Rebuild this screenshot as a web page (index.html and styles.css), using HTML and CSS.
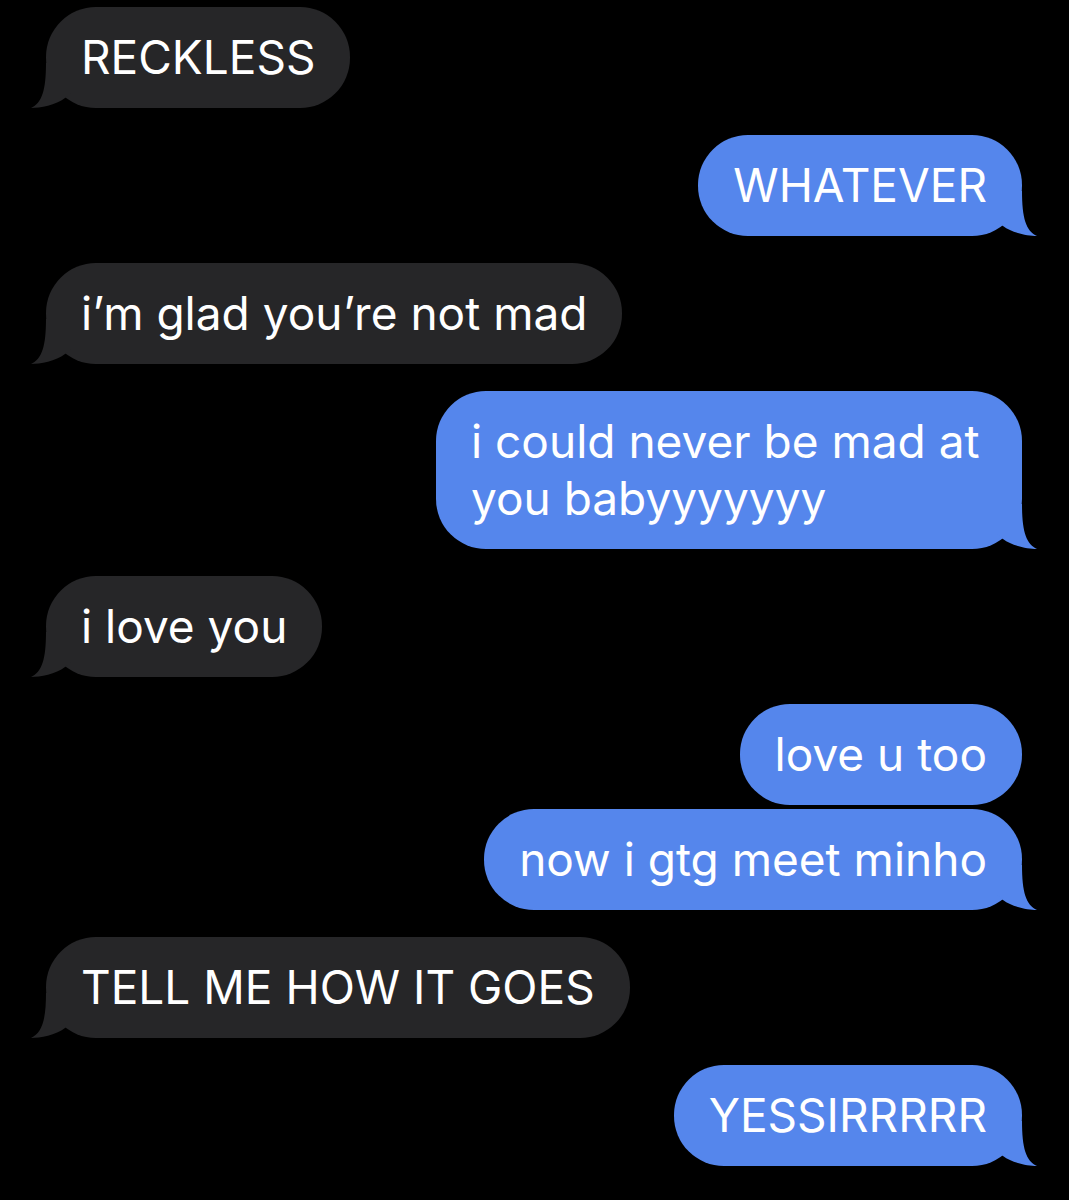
FILE: index.html
```html
<!DOCTYPE html>
<html>
<head>
<meta charset="utf-8">
<link rel="stylesheet" href="styles.css">
</head>
<body>
<div class="thread">
  <div class="msg them tail">RECKLESS<svg class="tl" viewBox="0 0 40 45"><path d="M40 0 L15 0 C15 27 11 40 0 45 C9 45 25 42 34 35 L40 30 Z"/></svg></div>
  <div class="msg me tail">WHATEVER<svg class="tr" viewBox="0 0 40 45"><path d="M0 0 L25 0 C25 27 29 40 40 45 C31 45 15 42 6 35 L0 30 Z"/></svg></div>
  <div class="msg them tail">i’m glad you’re not mad<svg class="tl" viewBox="0 0 40 45"><path d="M40 0 L15 0 C15 27 11 40 0 45 C9 45 25 42 34 35 L40 30 Z"/></svg></div>
  <div class="msg me tail wrap">i could never be mad at you babyyyyyyy<svg class="tr" viewBox="0 0 40 45"><path d="M0 0 L25 0 C25 27 29 40 40 45 C31 45 15 42 6 35 L0 30 Z"/></svg></div>
  <div class="msg them tail">i love you<svg class="tl" viewBox="0 0 40 45"><path d="M40 0 L15 0 C15 27 11 40 0 45 C9 45 25 42 34 35 L40 30 Z"/></svg></div>
  <div class="msg me">love u too</div>
  <div class="msg me tail cont">now i gtg meet minho<svg class="tr" viewBox="0 0 40 45"><path d="M0 0 L25 0 C25 27 29 40 40 45 C31 45 15 42 6 35 L0 30 Z"/></svg></div>
  <div class="msg them tail">TELL ME HOW IT GOES<svg class="tl" viewBox="0 0 40 45"><path d="M40 0 L15 0 C15 27 11 40 0 45 C9 45 25 42 34 35 L40 30 Z"/></svg></div>
  <div class="msg me tail">YESSIRRRRR<svg class="tr" viewBox="0 0 40 45"><path d="M0 0 L25 0 C25 27 29 40 40 45 C31 45 15 42 6 35 L0 30 Z"/></svg></div>
</div>
</body>
</html>
```
FILE: styles.css
```css
html, body {
  margin: 0;
  padding: 0;
  background: #000;
}
body {
  width: 1069px;
  height: 1200px;
  overflow: hidden;
}
.thread {
  display: flex;
  flex-direction: column;
  padding: 7px 47px 0 46px;
  font-family: Inter, "Noto Sans", sans-serif;
}
.msg {
  position: relative;
  box-sizing: border-box;
  padding: 22px 35px;
  line-height: 57px;
  font-size: 46px;
  color: #fff;
  border-radius: 50px;
  margin-top: 27px;
  white-space: nowrap;
}
.msg:first-child {
  margin-top: 0;
}
.msg.cont {
  margin-top: 4px;
}
.msg.wrap {
  white-space: normal;
  width: 586px;
}
.them {
  align-self: flex-start;
  background: #262628;
}
.me {
  align-self: flex-end;
  background: #5586ec;
}
.msg svg {
  position: absolute;
  bottom: 0;
  width: 40px;
  height: 45px;
}
.msg svg.tr {
  right: -15px;
}
.msg svg.tl {
  left: -15px;
}
.them svg path {
  fill: #262628;
}
.me svg path {
  fill: #5586ec;
}
```
